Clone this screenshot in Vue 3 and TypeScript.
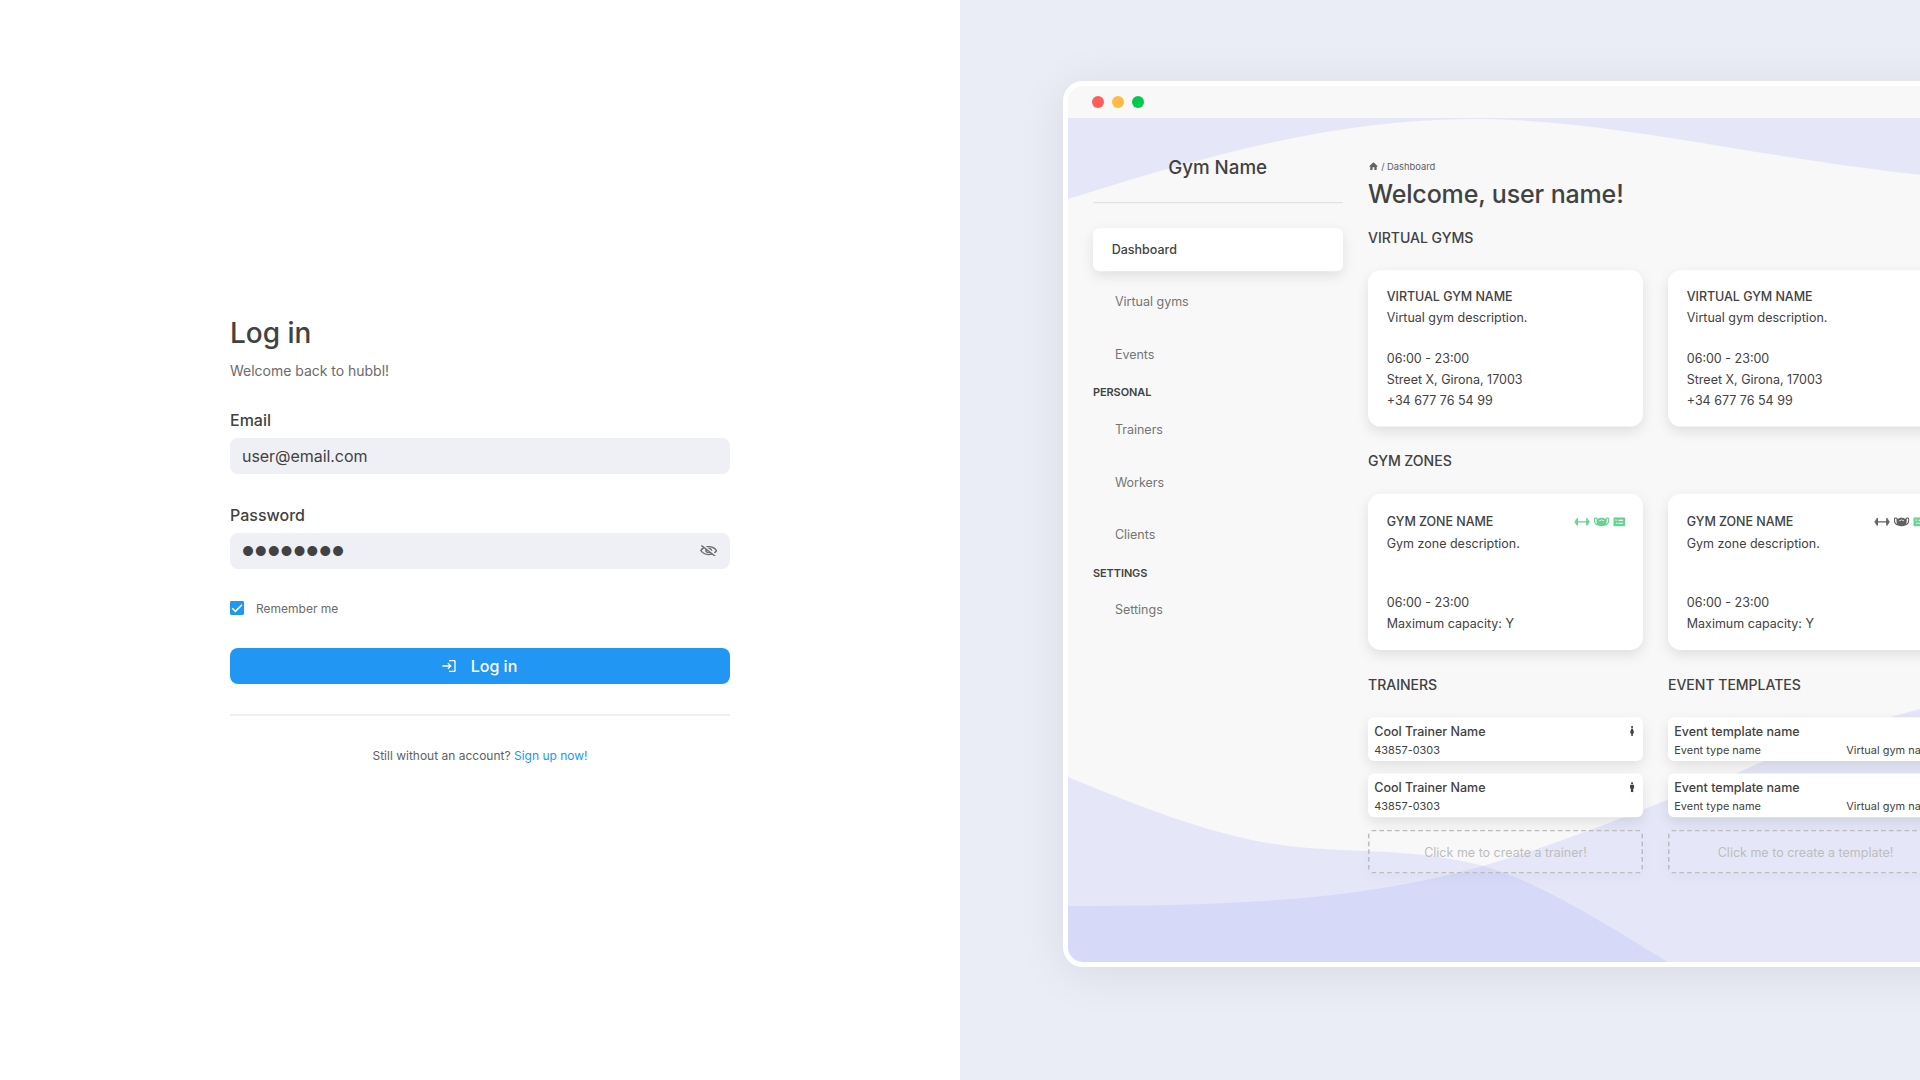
<script setup lang="ts">
import { ref } from 'vue'

interface NavGroup {
  title?: string
  items: string[]
}

const email = ref('user@email.com')
const remember = ref(true)

const nav: NavGroup[] = [
  { items: ['Dashboard', 'Virtual gyms', 'Events'] },
  { title: 'PERSONAL', items: ['Trainers', 'Workers', 'Clients'] },
  { title: 'SETTINGS', items: ['Settings'] },
]

const gyms = [1, 2]
const zones = [
  { id: 1, equipped: true },
  { id: 2, equipped: false },
]
const trainers = [
  { id: 1, gender: 'female' },
  { id: 2, gender: 'male' },
]
const templates = [1, 2]
</script>

<template>
  <div class="page">
    <main class="login">
      <form class="form" @submit.prevent>
        <h1 class="title">Log in</h1>
        <p class="subtitle">Welcome back to hubbl!</p>

        <label class="label">Email</label>
        <div class="field">{{ email }}</div>

        <label class="label">Password</label>
        <div class="field">
          <span class="dots">●●●●●●●●</span>
          <svg class="eye" viewBox="1 2.4 22 19.2" preserveAspectRatio="none">
            <path d="M12 6c3.79 0 7.17 2.13 8.82 5.5-.59 1.22-1.42 2.27-2.41 3.12l1.41 1.41c1.39-1.23 2.49-2.77 3.18-4.53C21.27 7.11 17 4 12 4c-1.27 0-2.49.2-3.64.57l1.65 1.65C10.66 6.09 11.32 6 12 6zm-1.07 1.14L13 9.21c.57.25 1.03.71 1.28 1.28l2.07 2.07c.08-.34.14-.7.14-1.07C16.5 9.01 14.48 7 12 7c-.37 0-.72.05-1.07.14zM2.01 3.87l2.68 2.68C3.06 7.83 1.77 9.53 1 11.5 2.73 15.89 7 19 12 19c1.52 0 2.98-.29 4.32-.82l3.42 3.42 1.41-1.41L3.42 2.45 2.01 3.87zm7.5 7.5l2.61 2.61c-.04.01-.08.02-.12.02-1.38 0-2.5-1.12-2.5-2.5 0-.05.01-.08.01-.13zm-3.4-3.4l1.75 1.75c-.23.55-.36 1.15-.36 1.78 0 2.48 2.02 4.5 4.5 4.5.63 0 1.23-.13 1.77-.36l.98.98c-.88.24-1.8.38-2.75.38-3.79 0-7.17-2.13-8.82-5.5.7-1.43 1.72-2.61 2.93-3.53z" />
          </svg>
        </div>

        <div class="remember" @click="remember = !remember">
          <svg class="check" viewBox="0 0 14 14">
            <rect width="14" height="14" rx="1.4" />
            <path v-if="remember" d="M2.2 7.3 5.4 10.4 12 3.8" />
          </svg>
          <span>Remember me</span>
        </div>

        <button class="submit" type="submit">
          <svg viewBox="0 0 24 24">
            <path d="M11 7 9.6 8.4l2.6 2.6H2v2h10.2l-2.6 2.6L11 17l5-5-5-5zm9 12h-8v2h8c1.1 0 2-.9 2-2V5c0-1.1-.9-2-2-2h-8v2h8v14z" />
          </svg>
          <span>Log in</span>
        </button>

        <div class="rule"></div>
        <p class="signup">Still without an account? <a>Sign up now!</a></p>
      </form>
    </main>

    <aside class="showcase">
      <div class="window">
        <div class="titlebar">
          <i class="dot red"></i>
          <i class="dot amber"></i>
          <i class="dot green"></i>
        </div>
        <div class="screen">
          <svg class="waves" viewBox="0 0 852 844">
            <path d="M0 0V81C130 40 265 1 405 1C540 1 680 38 852 56.7V0Z" />
            <path d="M0 659C78 691 154 722 232 729.3C300 735 350 731 415.5 748C470 764 530 801 599.4 844H0Z" />
            <path d="M0 788C150 788 290 784 415 748C520 717 600 680 667 655.7C730 628 790 607 852 591V844H0Z" />
          </svg>

          <div class="app">
            <nav class="sidebar">
              <div class="brand">Gym Name</div>
              <div class="menu">
                <template v-for="(group, g) in nav" :key="g">
                  <div v-if="group.title" class="group">{{ group.title }}</div>
                  <div
                    v-for="item in group.items"
                    :key="item"
                    class="item"
                    :class="{ active: item === 'Dashboard' }"
                  >
                    {{ item }}
                  </div>
                </template>
              </div>
            </nav>

            <section class="content">
              <div class="crumbs">
                <svg viewBox="0 0 24 24"><path d="M10 20v-6h4v6h5v-8h3L12 3 2 12h3v8z" /></svg>
                <span>/</span>
                <span>Dashboard</span>
              </div>
              <h2 class="welcome">Welcome, user name!</h2>

              <h3 class="heading">VIRTUAL GYMS</h3>
              <div class="row">
                <article v-for="gym in gyms" :key="gym" class="card">
                  <div>
                    <p class="name caps">VIRTUAL GYM NAME</p>
                    <p>Virtual gym description.</p>
                  </div>
                  <div>
                    <p>06:00 - 23:00</p>
                    <p>Street X, Girona, 17003</p>
                    <p>+34 677 76 54 99</p>
                  </div>
                </article>
              </div>

              <h3 class="heading next">GYM ZONES</h3>
              <div class="row">
                <article v-for="zone in zones" :key="zone.id" class="card">
                  <div>
                    <div class="zone-head">
                      <p class="name caps">GYM ZONE NAME</p>
                      <div class="icons">
                        <svg class="dumbbell" :class="{ on: zone.equipped }" viewBox="0 0 20 10">
                          <path d="M0 4.1h1.4V2.6q0-.6.6-.6h.7V.8q0-.8.8-.8h.5q.8 0 .8.8v3.3h10.4V.8q0-.8.8-.8h.5q.8 0 .8.8V2h.7q.6 0 .6.6v1.5H20v1.8h-1.4v1.5q0 .6-.6.6h-.7v1.2q0 .8-.8.8H16q-.8 0-.8-.8V5.9H4.8v3.3q0 .8-.8.8h-.5q-.8 0-.8-.8V8H2q-.6 0-.6-.6V5.9H0Z" />
                        </svg>
                        <svg class="mask" :class="{ on: zone.equipped }" viewBox="2 6 20 12">
                          <path fill-rule="evenodd" d="M19.5 6c-1.31 0-2.37 1.01-2.48 2.3C15.14 7.8 14.18 6.5 12 6.5c-2.19 0-3.14 1.3-5.02 1.8C6.87 7.02 5.81 6 4.5 6 3.12 6 2 7.12 2 8.5V9c0 6 3.6 7.81 6.52 7.98C9.53 17.62 10.72 18 12 18s2.47-.38 3.48-1.02C18.4 16.81 22 15 22 9v-.5C22 7.12 20.88 6 19.5 6zM3.5 9v-.5c0-.55.45-1 1-1s1 .45 1 1v3c0 1.28.38 2.47 1.01 3.48C4.99 14.27 3.5 12.65 3.5 9zm17 0c0 3.65-1.49 5.27-3.01 5.98.64-1.01 1.01-2.2 1.01-3.48v-3c0-.55.45-1 1-1s1 .45 1 1zM10.69 10.48c-.44.26-.96.56-1.69.76V10.2c.48-.17.84-.38 1.18-.58C10.72 9.3 11.23 9 12 9s1.27.3 1.8.62c.34.2.71.42 1.2.59v1.04c-.75-.21-1.26-.51-1.71-.78C12.83 10.2 12.49 10 12 10c-.5 0-.84.2-1.31.48z" />
                        </svg>
                        <svg class="list on" viewBox="0 0 15 12">
                          <path fill-rule="evenodd" d="M1.5 0h12Q15 0 15 1.5v9q0 1.5-1.5 1.5h-12Q0 12 0 10.5v-9Q0 0 1.5 0ZM2.8 3v1.4h1.5V3ZM6.6 3.3v1.4h5.6V3.3ZM3.6 7v1.4h2V7ZM6.6 7v1.4h5.6V7Z" />
                        </svg>
                      </div>
                    </div>
                    <p>Gym zone description.</p>
                  </div>
                  <div>
                    <p>06:00 - 23:00</p>
                    <p>Maximum capacity: Y</p>
                  </div>
                </article>
              </div>

              <div class="row">
                <div class="column">
                  <h3 class="heading next">TRAINERS</h3>
                  <div class="stack">
                    <article v-for="trainer in trainers" :key="trainer.id" class="entry">
                      <div class="line name">
                        <span>Cool Trainer Name</span>
                        <svg class="person" viewBox="0 0 8 13">
                          <circle cx="4" cy="1.5" r="1.4" />
                          <path v-if="trainer.gender === 'female'" d="M3.2 3.4h1.6L6.7 8.6l-.8.4-.6-1.2.7 2.2H5v3H3v-3H2l.7-2.2L2.1 9 1.3 8.6Z" />
                          <path v-else d="M2.4 3.4h3.2q1 0 1 1V8.2H5.5V13h-3V8.2H1.4V4.4q0-1 1-1Z" />
                        </svg>
                      </div>
                      <div class="line small">43857-0303</div>
                    </article>
                    <button class="create" type="button">
                      <svg class="outline" viewBox="0 0 352 56">
                        <path class="h" d="M4.6 1H348.4M4.6 55H348.4" />
                        <path class="v" d="M1 5V51M351 5V51" />
                      </svg>
                      <span>Click me to create a trainer!</span>
                    </button>
                  </div>
                </div>
                <div class="column">
                  <h3 class="heading next">EVENT TEMPLATES</h3>
                  <div class="stack">
                    <article v-for="template in templates" :key="template" class="entry">
                      <div class="line name">Event template name</div>
                      <div class="line small">
                        <span>Event type name</span>
                        <span>Virtual gym name</span>
                      </div>
                    </article>
                    <button class="create" type="button">
                      <svg class="outline" viewBox="0 0 352 56">
                        <path class="h" d="M4.6 1H348.4M4.6 55H348.4" />
                        <path class="v" d="M1 5V51M351 5V51" />
                      </svg>
                      <span>Click me to create a template!</span>
                    </button>
                  </div>
                </div>
              </div>
            </section>
          </div>
        </div>
      </div>
    </aside>
  </div>
</template>

<style>
body {
  margin: 0;
  overflow: hidden;
}
</style>

<style scoped>
.page {
  display: flex;
  width: 1920px;
  height: 1080px;
  overflow: hidden;
  background: #fff;
  color: #424242;
  font-family: Inter, 'Liberation Sans', sans-serif;
}
h1, h2, h3, p {
  margin: 0;
  font-weight: 400;
}
button {
  font-family: inherit;
}

.login {
  display: flex;
  justify-content: center;
  width: 960px;
}
.form {
  display: flex;
  flex-direction: column;
  width: 500px;
  padding-top: 316px;
}
.title {
  font-size: 28px;
  font-weight: 500;
  line-height: 34px;
}
.subtitle {
  margin-top: 12px;
  font-size: 14px;
  line-height: 17px;
  letter-spacing: -0.02px;
  color: #6b6b6b;
}
.label {
  margin: 31px 0 8px;
  font-size: 16px;
  font-weight: 500;
  line-height: 20px;
}
.field {
  display: flex;
  align-items: center;
  justify-content: space-between;
  height: 36px;
  padding: 0 13px 1px 12px;
  box-sizing: border-box;
  border-radius: 8px;
  background: #eff0f5;
  font-size: 16px;
  letter-spacing: -0.05px;
}
.dots {
  font-size: 13.2px;
  letter-spacing: 0.8px;
}
.eye {
  width: 17.4px;
  height: 11.8px;
  fill: #6b6b6b;
}
.remember {
  display: flex;
  align-items: center;
  gap: 12px;
  height: 20px;
  margin-top: 29px;
  font-size: 12px;
  color: #6b6b6b;
}
.check {
  width: 14px;
  height: 14px;
  fill: #2196f3;
}
.check path {
  fill: none;
  stroke: #fff;
  stroke-width: 1.5;
}
.submit {
  display: flex;
  align-items: center;
  justify-content: center;
  gap: 14px;
  height: 36px;
  margin-top: 30px;
  padding: 0 2px 1px 0;
  border: 0;
  border-radius: 8px;
  background: #2196f3;
  color: #fff;
  font-size: 16px;
  font-weight: 500;
}
.submit svg {
  width: 16px;
  height: 16px;
  fill: #fff;
}
.rule {
  height: 2px;
  margin: 30px 0 32px;
  background: #eeeff5;
}
.signup {
  font-size: 12px;
  line-height: 16px;
  text-align: center;
  color: #616161;
}
.signup a {
  color: #2196f3;
}

.showcase {
  width: 960px;
  padding: 81px 0 0 103px;
  box-sizing: border-box;
  overflow: hidden;
  background: #eaedf6;
}
.window {
  width: 1510px;
  height: 886px;
  box-sizing: border-box;
  border: 5px solid #fff;
  border-radius: 20px;
  overflow: hidden;
  background: #f8f8f8;
  box-shadow: 0 6px 50px rgba(0, 0, 0, 0.08);
}
.titlebar {
  display: flex;
  align-items: center;
  gap: 8px;
  height: 32px;
  padding-left: 24px;
}
.dot {
  width: 12px;
  height: 12px;
  border-radius: 50%;
}
.red {
  background: #ff5c5c;
}
.amber {
  background: #ffbb43;
}
.green {
  background: #00ca4e;
}
.screen {
  position: relative;
  height: 844px;
}
.waves {
  position: absolute;
  top: 0;
  left: 0;
  width: 852px;
  height: 844px;
  fill: rgba(155, 167, 252, 0.2);
}

/* The dashboard is laid out at 1920x1080 and shrunk to fit the window. */
.app {
  position: relative;
  display: flex;
  gap: 32px;
  width: 1920px;
  height: 1080px;
  padding: 0 32px;
  box-sizing: border-box;
  transform: scale(0.78125);
  transform-origin: 0 0;
  font-size: 16px;
}
.sidebar {
  flex: 0 0 320px;
}
.brand {
  height: 109px;
  padding-top: 47px;
  padding-right: 1px;
  box-sizing: border-box;
  border-bottom: 1px solid #d6d6d6;
  font-size: 24px;
  font-weight: 500;
  line-height: 33px;
  text-align: center;
}
.menu {
  display: flex;
  flex-direction: column;
  gap: 12px;
  padding-top: 32px;
}
.item {
  height: 55px;
  padding-left: 28px;
  line-height: 55px;
  color: #757575;
}
.item.active {
  padding-left: 24px;
  border-radius: 8px;
  background: #fff;
  box-shadow: 0 6px 16px rgba(0, 0, 0, 0.1);
  color: #424242;
  font-weight: 500;
}
.group {
  height: 17.6px;
  font-size: 14px;
  font-weight: 600;
  line-height: 17.6px;
  letter-spacing: -0.006em;
}

.content {
  padding-top: 53px;
}
.crumbs {
  display: flex;
  align-items: center;
  height: 18px;
  font-size: 12px;
  color: #616161;
}
.crumbs svg {
  width: 14px;
  height: 14px;
  margin-right: 3px;
  fill: #616161;
}
.crumbs span + span {
  margin-left: 3px;
}
.welcome {
  margin: 7px 0 24px;
  font-size: 32px;
  font-weight: 500;
  line-height: 40px;
  letter-spacing: -0.006em;
}
.heading {
  margin-bottom: 29px;
  font-size: 18px;
  font-weight: 500;
  line-height: 24px;
  letter-spacing: -0.003em;
}
.next {
  margin-top: 33px;
}
.row {
  display: flex;
  gap: 32px;
}
.column {
  width: 352px;
}
.card {
  display: flex;
  flex-direction: column;
  justify-content: space-between;
  width: 352px;
  height: 200px;
  padding: 20px 24px;
  box-sizing: border-box;
  border-radius: 16px;
  background: #fff;
  box-shadow: 0 6px 16px rgba(0, 0, 0, 0.1);
  line-height: 27px;
}
.name {
  font-weight: 500;
}
.caps {
  letter-spacing: -0.004em;
}
.zone-head {
  display: flex;
  align-items: center;
  justify-content: space-between;
  height: 31px;
}
.icons {
  display: flex;
  align-items: center;
  gap: 5px;
  margin-right: -1px;
}
.icons svg {
  fill: #616161;
}
.icons .on {
  fill: #68d391;
}
.dumbbell {
  width: 20px;
  height: 10px;
}
.mask {
  width: 20px;
  height: 12px;
}
.list {
  width: 15px;
  height: 12px;
}
.stack {
  display: flex;
  flex-direction: column;
  gap: 16px;
}
.entry {
  height: 56px;
  padding: 5.5px 8px;
  box-sizing: border-box;
  border-radius: 8px;
  background: #fff;
  box-shadow: 0 6px 16px rgba(0, 0, 0, 0.1);
}
.line {
  display: flex;
  align-items: center;
  justify-content: space-between;
  height: 24px;
}
.small {
  height: 23px;
  font-size: 14px;
}
.person {
  width: 8px;
  height: 13px;
  margin-right: 2px;
  fill: #424242;
}
.create {
  position: relative;
  height: 56px;
  padding: 2px 0 0;
  border: 0;
  border-radius: 8px;
  background: none;
  box-shadow: 0 6px 16px rgba(0, 0, 0, 0.03);
  color: #bdbdbd;
  font-size: 16px;
}
.outline {
  position: absolute;
  top: 0;
  left: 0;
  width: 352px;
  height: 56px;
  fill: none;
  stroke: #bdbdbd;
  stroke-width: 2;
}
.outline .h {
  stroke-dasharray: 6 3.935;
}
.outline .v {
  stroke-dasharray: 6 4;
}
</style>
